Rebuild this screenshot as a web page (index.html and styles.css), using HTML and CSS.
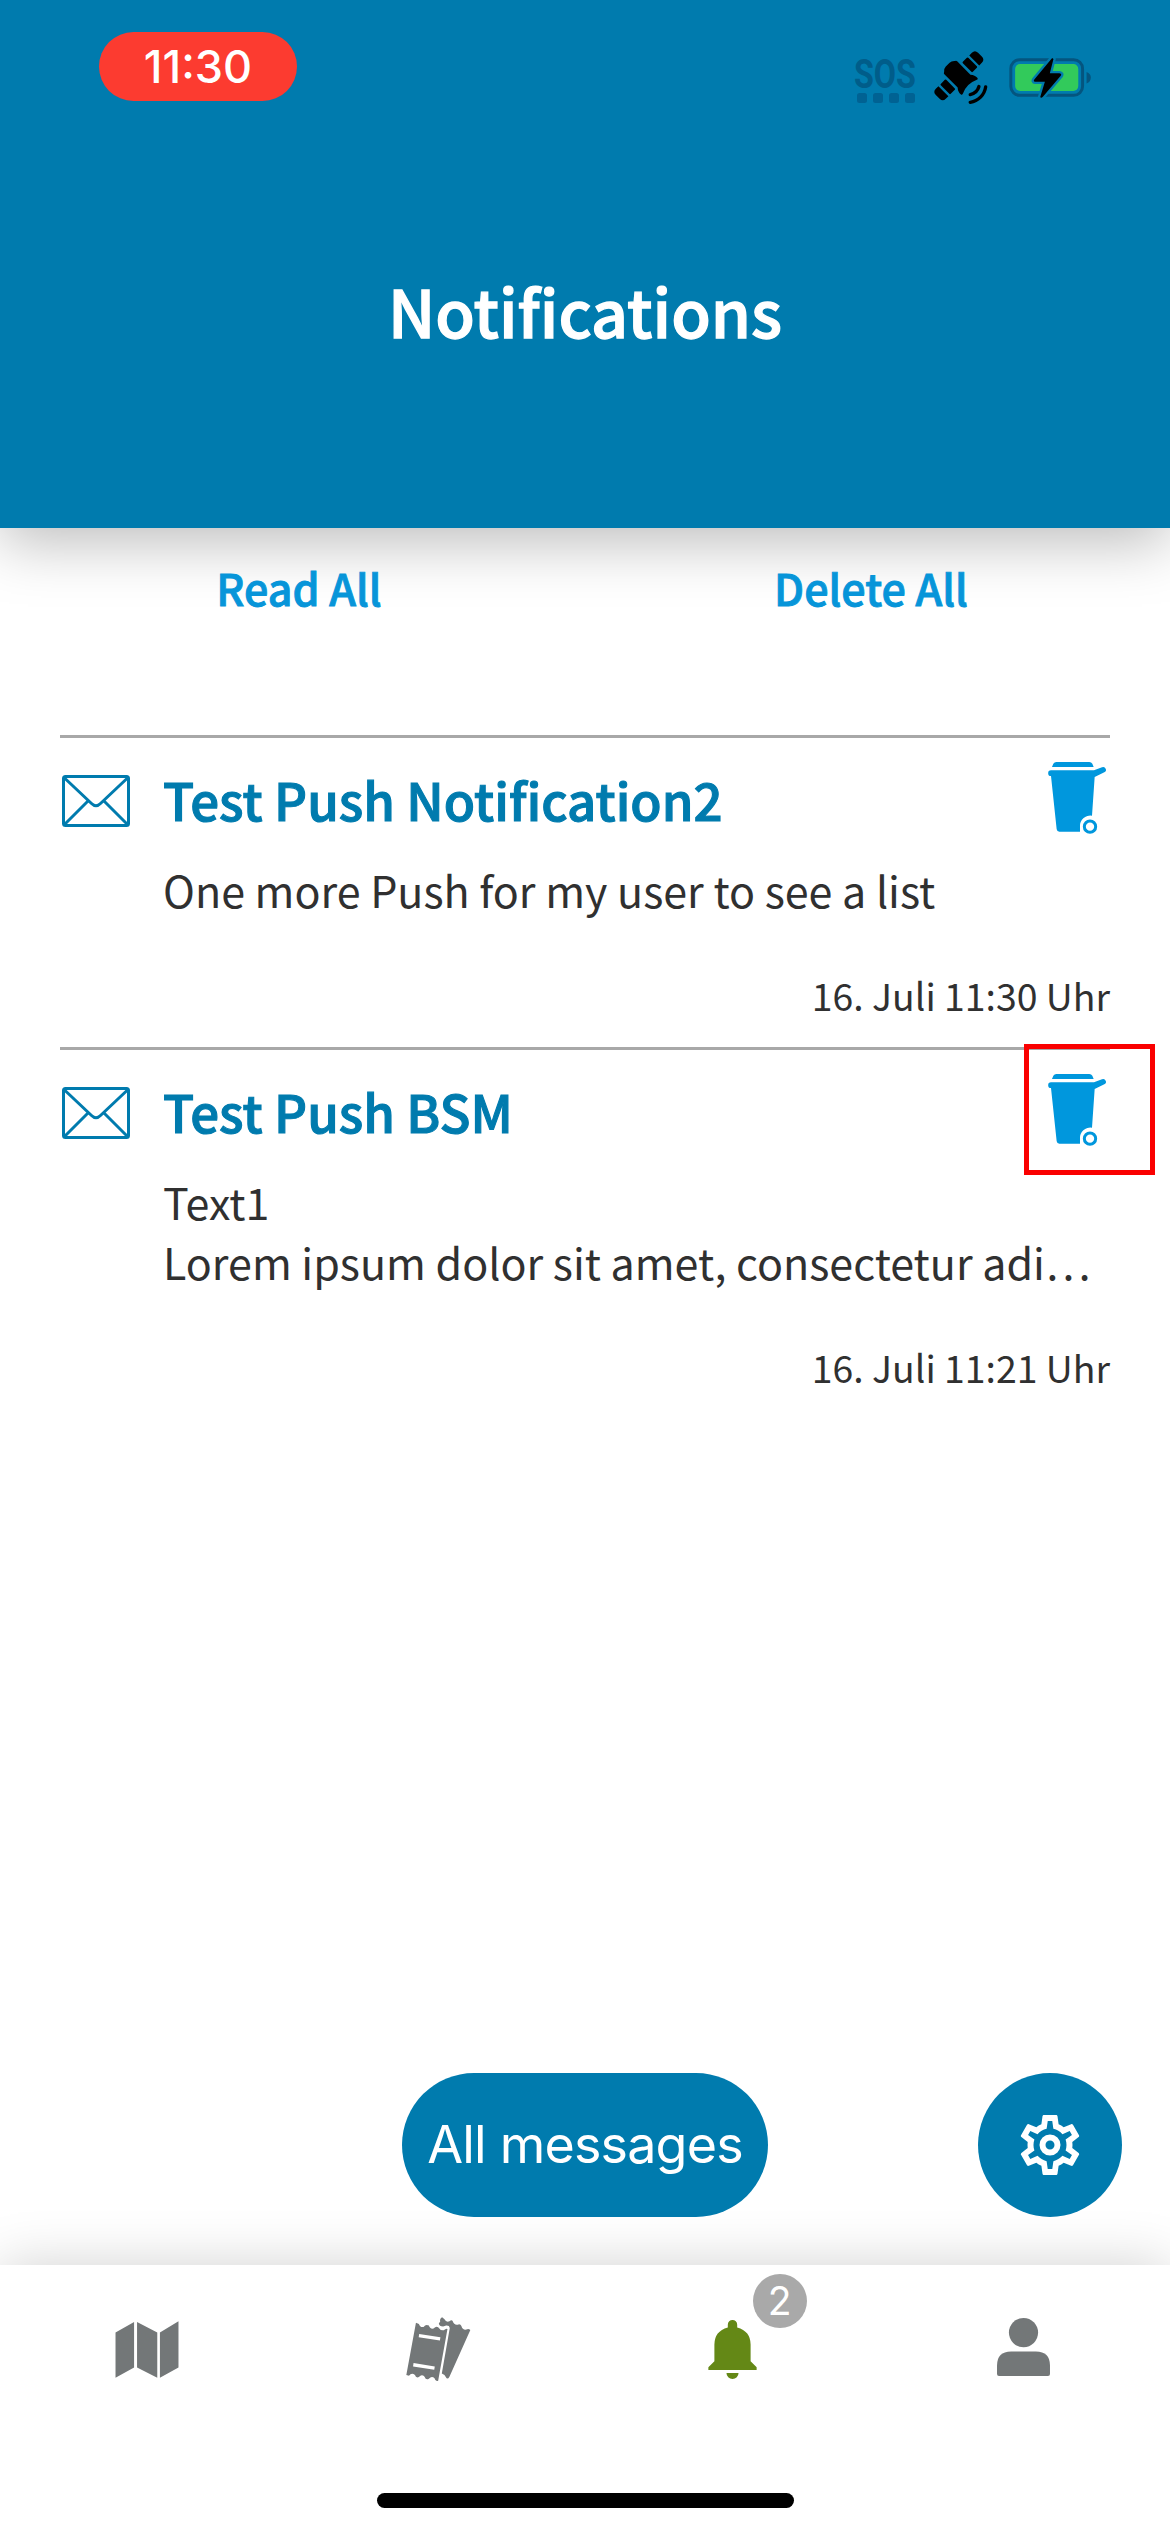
FILE: index.html
```html
<!DOCTYPE html>
<html lang="en">
<head>
<meta charset="utf-8">
<title>Notifications</title>
<link rel="stylesheet" href="styles.css">
</head>
<body>
<svg class="defs" aria-hidden="true">
  <symbol id="envelope" viewBox="0 0 68 52">
    <g fill="none" stroke="currentColor" stroke-width="3">
      <rect x="1.5" y="1.5" width="65" height="49" rx="2"/>
      <path d="M2.5 3 L29.5 28.5 Q34 33 38.500 28.500 L65.500 3 M2.500 49.500 L26 26 M65.500 49.500 L42 26"/>
    </g>
  </symbol>
  <symbol id="bin" viewBox="805 96 172 216">
    <path fill="currentColor" d="M816 111 L820 101 Q823 96 829 96 H928 Q934 96 937 101 L941 111Z M813 121 H942 L966 112 A8 8 0 0 1 973 127 L944 141 L936 257 A31 31 0 0 0 900 290 L900 305 H838 Q831 305 830 298 L813 138 A8.500 8.500 0 0 1 813 121Z"/>
    <circle cx="930" cy="290" r="17" fill="none" stroke="currentColor" stroke-width="9"/>
  </symbol>
</svg>

<div class="screen">
  <header class="header">
    <div class="status">
      <span class="time">11:30</span>
      <div class="status-icons">
        <svg class="sos" viewBox="0 -12 64 62">
          <text x="1" y="31.500" textLength="62" lengthAdjust="spacingAndGlyphs">SOS</text>
          <rect x="4" y="37" width="10" height="10" rx="2.500"/>
          <rect x="20" y="37" width="10" height="10" rx="2.500"/>
          <rect x="36" y="37" width="10" height="10" rx="2.500"/>
          <rect x="52" y="37" width="10" height="10" rx="2.500"/>
        </svg>
        <svg class="satellite" viewBox="308 60 164 164">
          <g transform="translate(385 137) rotate(-45)">
            <path d="M-65 -21 V21 H-76 Q-89 21 -89 8 V-8 Q-89 -21 -76 -21Z M65 -21 V21 H76 Q89 21 89 8 V-8 Q89 -21 76 -21Z"/>
            <rect x="-58" y="-21" width="23" height="42" rx="3"/>
            <rect x="35" y="-21" width="23" height="42" rx="3"/>
            <path d="M-27 -34 Q-27 -38 -23 -39 Q-16 -47 -8 -47 H8 Q16 -47 23 -39 Q27 -38 27 -34 V22 Q36 32 35 44 Q34 49 28 46 Q0 33 -28 46 Q-34 49 -35 44 Q-36 32 -27 22Z"/>
          </g>
          <path d="M445 169 A34 34 0 0 1 419 193 M465 170 A54 54 0 0 1 419 216" fill="none" stroke="#000" stroke-width="10" stroke-linecap="round"/>
        </svg>
        <svg class="battery" viewBox="536 80 250 124">
          <rect x="541" y="88" width="217" height="108" rx="27" fill="none" stroke="#04557f" stroke-width="9"/>
          <path d="M770 125 Q783 130 783 142 Q783 155 770 160Z" fill="#04557f"/>
          <rect x="554" y="101" width="191" height="82" rx="15" fill="#32ca5b"/>
          <path d="M666 83 L612 148 Q608 154 615 155 H644 L630 201 Q632 206 638 200 L692 137 Q696 130 688 129 H659 L670 86Z" fill="#000" stroke="#007bae" stroke-width="14" paint-order="stroke" stroke-linejoin="round"/>
        </svg>
      </div>
    </div>
    <h1>Notifications</h1>
  </header>

  <main class="content">
    <div class="actions">
      <a class="read-all">Read All</a>
      <a class="delete-all">Delete All</a>
    </div>

    <article class="item">
      <svg class="envelope"><use href="#envelope"/></svg>
      <div class="item-main">
        <h2>Test Push Notification2</h2>
        <p>One more Push for my user to see a list</p>
      </div>
      <button class="delete"><svg class="bin"><use href="#bin"/></svg></button>
      <time>16. Juli 11:30 Uhr</time>
    </article>

    <article class="item">
      <svg class="envelope"><use href="#envelope"/></svg>
      <div class="item-main">
        <h2>Test Push BSM</h2>
        <p>Text1<br>Lorem ipsum dolor sit amet, consectetur adi…</p>
      </div>
      <button class="delete marked"><svg class="bin"><use href="#bin"/></svg></button>
      <time>16. Juli 11:21 Uhr</time>
    </article>
  </main>

  <div class="floating">
    <button class="all">All messages</button>
    <button class="settings">
      <svg viewBox="0 0 24 24"><path fill="#fff" d="M10,22C9.75,22 9.54,21.82 9.5,21.58L9.13,18.93C8.5,18.68 7.96,18.34 7.44,17.94L4.95,18.95C4.73,19.03 4.46,18.95 4.34,18.73L2.34,15.27C2.21,15.05 2.27,14.78 2.46,14.63L4.57,12.97L4.5,12L4.57,11L2.46,9.37C2.27,9.22 2.21,8.95 2.34,8.73L4.34,5.27C4.46,5.05 4.73,4.96 4.95,5.05L7.44,6.05C7.96,5.66 8.5,5.32 9.13,5.07L9.5,2.42C9.54,2.18 9.75,2 10,2H14C14.25,2 14.46,2.18 14.5,2.42L14.87,5.07C15.5,5.32 16.04,5.66 16.56,6.05L19.05,5.05C19.27,4.96 19.54,5.05 19.66,5.27L21.66,8.73C21.79,8.95 21.73,9.22 21.54,9.37L19.43,11L19.5,12L19.43,13L21.54,14.63C21.73,14.78 21.79,15.05 21.66,15.27L19.66,18.73C19.54,18.95 19.27,19.04 19.05,18.95L16.56,17.95C16.04,18.34 15.5,18.68 14.87,18.93L14.5,21.58C14.46,21.82 14.25,22 14,22H10M11.25,4L10.88,6.61C9.68,6.86 8.62,7.5 7.85,8.39L5.44,7.35L4.69,8.65L6.8,10.2C6.4,11.37 6.4,12.64 6.8,13.8L4.68,15.36L5.43,16.66L7.86,15.62C8.63,16.5 9.68,17.14 10.87,17.38L11.24,20H12.76L13.13,17.39C14.32,17.14 15.37,16.5 16.14,15.62L18.57,16.66L19.32,15.36L17.2,13.81C17.6,12.64 17.6,11.37 17.2,10.2L19.31,8.65L18.56,7.35L16.15,8.39C15.38,7.5 14.32,6.86 13.12,6.62L12.75,4H11.25Z"/><circle cx="12" cy="12" r="2.500" fill="none" stroke="#fff" stroke-width="2"/></svg>
    </button>
  </div>

  <nav class="tabs">
    <a class="tab"><svg class="map" viewBox="75 240 192 172"><path fill="#737778" d="M76 275 L132 243 V380 L76 411Z M141 243 L202 275 V411 L141 380Z M210 275 L266 241 V380 L210 411Z"/></svg></a>
    <a class="tab"><svg class="tickets" viewBox="950 230 194 196">
      <path fill="#737778" d="M1058 231 L1065 237 Q1070 247 1080 243 Q1087 237 1090 243 Q1094 255 1105 253 Q1113 250 1116 257 Q1120 270 1131 268 Q1137 264 1143 269 L1080 410 Q1074 421 1069 411 Q1067 403 1057 400 L1081 263 Q1080 255 1070 256 L1061 259 Q1049 259 1048 249 L1052 244 Q1050 235 1058 231Z"/>
      <path fill="#737778" d="M979 247 L988 251 Q991 262 1002 260 Q1009 250 1018 256 Q1021 267 1032 265 Q1040 256 1046 261 Q1053 272 1063 270 Q1070 263 1074 266 L1046 422 Q1038 426 1035 415 Q1027 406 1018 416 Q1009 421 1005 410 Q996 401 988 411 Q979 415 976 405 Q966 397 958 407 L950 405Z"/>
      <path stroke="#fff" stroke-width="10" d="M988 286 L1052 296 M971 374 L1035 384"/>
    </svg></a>
    <a class="tab"><svg class="bell" viewBox="113 236 146 176"><path fill="#648816" d="M172 258 V250 A14 14 0 0 1 200 250 V258 Q240 269 240 309 V359 L258 377 V385 H114 V377 L132 359 V309 Q132 269 172 258Z M168 394 H204 A18 18 0 0 1 168 394Z"/></svg><span class="badge">2</span></a>
    <a class="tab"><svg class="person" viewBox="983 233 158 173"><g fill="#737778"><circle cx="1062" cy="276.500" r="43.500"/><path d="M983 375 Q983 333 1025 333 H1099 Q1141 333 1141 375 V400 Q1141 406 1135 406 H989 Q983 406 983 400Z"/></g></svg></a>
    <div class="home"></div>
  </nav>
</div>
</body>
</html>
```
FILE: styles.css
```css
*, *::after { box-sizing: border-box; }
body {
  margin: 0;
  background: #fff;
  font-family: "Noto Sans CJK SC", "Noto Sans", sans-serif;
  color: #303030;
}
h1, h2, p { margin: 0; }
button { border: 0; padding: 0; background: none; font: inherit; }
svg { display: block; }
.defs { display: none; }

.screen {
  width: 1170px;
  height: 2532px;
  display: flex;
  flex-direction: column;
  overflow: hidden;
}

/* Header */
.header {
  flex: none;
  height: 528px;
  background: #007bae;
  color: #fff;
  box-shadow: 0 15px 56px rgba(0, 0, 0, .26);
}
.status {
  height: 265px;
  padding: 32px 78px 0 99px;
  display: flex;
  justify-content: space-between;
  align-items: flex-start;
}
.time {
  width: 198px;
  height: 69px;
  border-radius: 35px;
  background: #fc3b30;
  font: 500 45px/70px Inter, sans-serif;
  text-align: center;
}
.status-icons { display: flex; padding-top: 12px; }
.sos { width: 64px; height: 62px; margin-right: 16px; fill: #005d8a; }
.sos text { font: 700 41px Roboto, sans-serif; }
.sos rect { fill: #006293; }
.satellite { width: 55px; height: 55px; margin: 6px 21px 0 0; }
.battery { width: 83px; height: 41px; margin-top: 13px; }
h1 {
  font-size: 64.5px;
  font-weight: 500;
  line-height: 90px;
  text-align: center;
  -webkit-text-stroke: 1.3px currentColor;
}

/* Notification list */
.content { flex: 1; padding: 29px 60px 0; }
.actions {
  display: grid;
  grid-template-columns: 1fr 1fr;
  margin: 0 -47px 118px;
  font-size: 43px;
  font-weight: 500;
  line-height: 60px;
  text-align: center;
  color: #0795d9;
  -webkit-text-stroke: .9px currentColor;
}
.item {
  display: grid;
  grid-template-columns: 103px 1fr 62px;
  border-top: 3px solid #a8a8a8;
  padding: 31px 0 30px;
  align-items: start;
}
.envelope { width: 68px; height: 52px; margin: 6px 0 0 2px; color: #007bae; }
.item-main { white-space: nowrap; min-width: 0; }
h2 {
  font-size: 51px;
  font-weight: 500;
  line-height: 60px;
  color: #007bae;
  -webkit-text-stroke: 1.1px currentColor;
}
p { margin-top: 30px; font-size: 43px; line-height: 60px; }
.delete { position: relative; height: 72px; margin-top: -7px; }
.bin { width: 58px; height: 72px; color: #0097dd; }
.marked::after {
  content: "";
  position: absolute;
  left: -24px;
  top: -30px;
  width: 131px;
  height: 131px;
  border: 5px solid #fa0000;
}
time {
  grid-column: 1 / -1;
  margin-top: 54px;
  font-size: 37.4px;
  line-height: 44px;
  text-align: right;
}

/* Floating buttons */
.floating {
  flex: none;
  height: 192px;
  padding: 0 48px 0 402px;
  display: flex;
  justify-content: space-between;
  align-items: flex-start;
}
.all {
  width: 366px;
  height: 144px;
  border-radius: 72px;
  background: #007bae;
  color: #fff;
  font: 400 52px/144px Inter, sans-serif;
  letter-spacing: -.8px;
  white-space: nowrap;
}
.settings {
  width: 144px;
  height: 144px;
  border-radius: 50%;
  background: #007bae;
  display: grid;
  place-items: center;
}
.settings svg { width: 72px; height: 72px; }

/* Tab bar */
.tabs {
  flex: none;
  height: 267px;
  display: grid;
  grid-template-columns: repeat(4, 1fr);
  grid-template-rows: 168px 1fr;
  justify-items: center;
  box-shadow: 0 0 52px rgba(0, 0, 0, .18);
}
.tab { position: relative; height: 168px; display: flex; align-items: center; }
.map { width: 64px; height: 57px; margin-left: 2px; }
.tickets { width: 65px; height: 65px; }
.bell { width: 49px; height: 59px; margin-left: 2px; }
.person { width: 53px; height: 58px; margin-top: -4px; }
.badge {
  position: absolute;
  left: 47px;
  top: 9px;
  width: 54px;
  height: 54px;
  border-radius: 50%;
  background: #a9a9a9;
  color: #fff;
  font: 400 39px/54px Inter, sans-serif;
  text-align: center;
}
.home {
  grid-column: 1 / -1;
  width: 417px;
  height: 15px;
  margin-top: 60px;
  border-radius: 8px;
  background: #000;
}
```
